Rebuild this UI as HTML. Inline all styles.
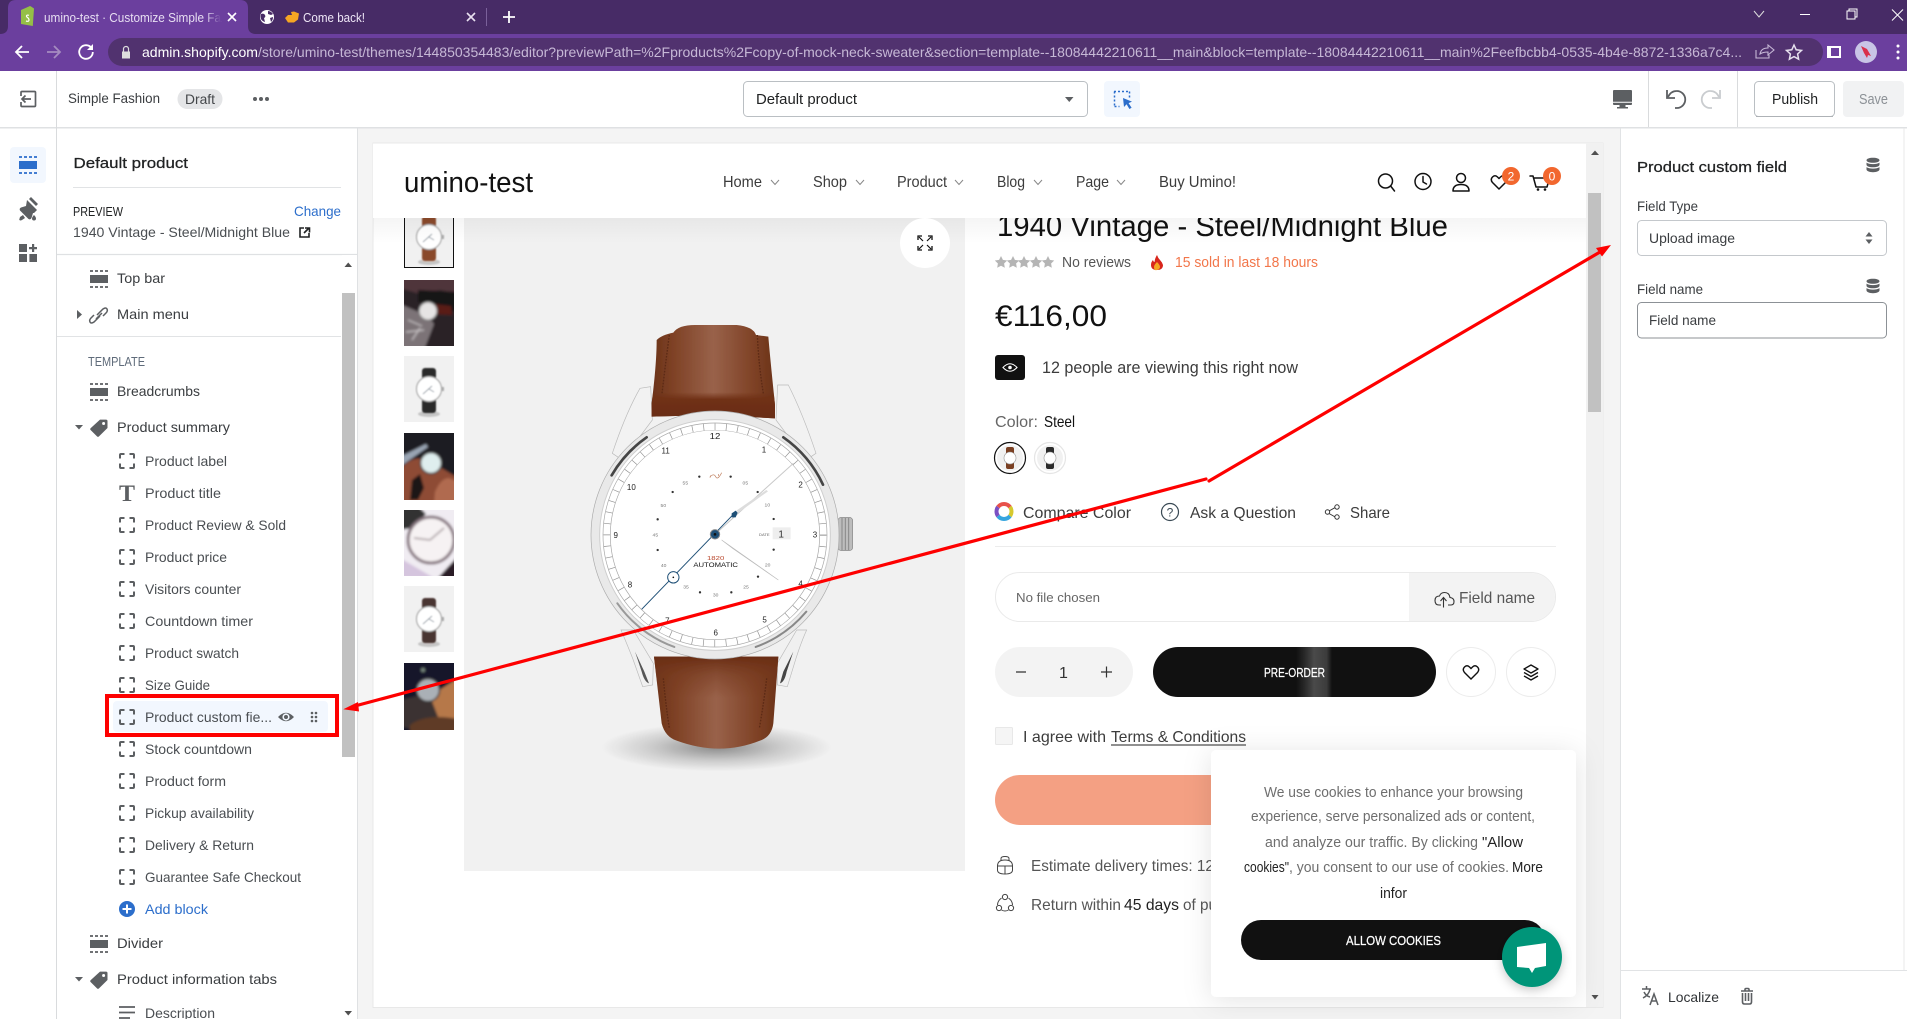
<!DOCTYPE html>
<html lang="en"><head><meta charset="utf-8"><title>umino-test - Customize Simple Fashion</title>
<style>
html,body{margin:0;padding:0;width:1907px;height:1019px;overflow:hidden;background:#fff}
svg{display:block}
text{font-family:"Liberation Sans",sans-serif;white-space:pre}
.a{font-size:14px;fill:#4a4e52}
.h{font-size:14px;fill:#3a3d40}
.t{font-size:15px;fill:#202223;stroke:#202223;stroke-width:.25px}
.p{font-size:16px;fill:#3c3c3c}
.c{font-size:14.5px;fill:#6e6e6e}
.d{font-size:14.5px;fill:#222}
.w{font-size:24px;fill:#222}
.m{font-size:15px;fill:#777}
.ic{fill:none;stroke:#111;stroke-width:1.500;stroke-linecap:round;stroke-linejoin:round}
</style></head><body>
<svg width="1907" height="1019" viewBox="0 0 1907 1019" xmlns="http://www.w3.org/2000/svg">
<defs>
<symbol id="sec" viewBox="0 0 18 18"><path d="M0 1h18M0 17h18" stroke="currentColor" stroke-width="1.800" stroke-dasharray="3 2"/><rect y="5" width="18" height="8" fill="currentColor"/></symbol>
<symbol id="blk" viewBox="0 0 16 16"><path d="M1 5.500V2a1 1 0 0 1 1-1h3.500M10.500 1H14a1 1 0 0 1 1 1v3.500M15 10.500V14a1 1 0 0 1-1 1h-3.500M5.500 15H2a1 1 0 0 1-1-1v-3.500" fill="none" stroke="#5c5f62" stroke-width="2"/></symbol>
<symbol id="tag" viewBox="0 0 18 18"><path fill="#5c5f62" fill-rule="evenodd" d="M10 .6h6a1.500 1.500 0 0 1 1.500 1.500V9L9 17.400a1.400 1.400 0 0 1-2 0L.7 11.100a1.400 1.400 0 0 1 0-2zM13.600 3a1.500 1.500 0 1 0 0 3 1.500 1.500 0 0 0 0-3z"/></symbol>
<symbol id="db" viewBox="0 0 16 16"><path fill="#5c5f62" d="M8 .8c3.600 0 6.500 1 6.500 2.500S11.600 5.800 8 5.800 1.500 4.800 1.500 3.300 4.400.8 8 .8zM1.500 5.600c1.300 1 3.800 1.500 6.500 1.500s5.200-.5 6.500-1.500v2.200C14.500 9.300 11.600 10.300 8 10.300S1.500 9.300 1.500 7.800zM1.500 10.100c1.300 1 3.800 1.500 6.500 1.500s5.200-.5 6.500-1.500v2.400c0 1.500-2.900 2.700-6.500 2.700s-6.500-1.200-6.500-2.700z"/></symbol>
<symbol id="mini" viewBox="0 0 50 66"><ellipse cx="25" cy="58" rx="11" ry="3" fill="#000" opacity=".18"/><rect x="18" y="12" width="14" height="16" rx="3" fill="currentColor"/><rect x="18" y="40" width="14" height="17" rx="3" fill="currentColor"/><circle cx="25" cy="33" r="12.500" fill="#fff" stroke="#a8a8a8" stroke-width="1.200"/><rect x="38" y="31" width="2" height="4" fill="#aaa"/><path d="M19 38L28 30M25 33l5 3" stroke="#567" stroke-width=".7"/></symbol>
<linearGradient id="strap" x1="0" x2="1" y1="0" y2="0"><stop offset="0" stop-color="#6b3319"/><stop offset=".18" stop-color="#7f4226"/><stop offset=".5" stop-color="#99624a"/><stop offset=".82" stop-color="#7f4226"/><stop offset="1" stop-color="#6b3319"/></linearGradient>
<linearGradient id="strapT" x1="0" x2="0" y1="0" y2="1"><stop offset=".72" stop-color="#6f3016" stop-opacity="0"/><stop offset=".8" stop-color="#6f3016"/><stop offset="1" stop-color="#6a2d14"/></linearGradient>
<linearGradient id="strapB" x1="0" x2="0" y1="0" y2="1"><stop offset="0" stop-color="#6a2d14"/><stop offset=".2" stop-color="#74371c" stop-opacity=".5"/><stop offset=".45" stop-color="#7a3a1f" stop-opacity="0"/></linearGradient>
<linearGradient id="hsh" x1="0" x2="0" y1="0" y2="1"><stop offset="0" stop-color="#000" stop-opacity=".04"/><stop offset="1" stop-color="#000" stop-opacity="0"/></linearGradient>
<linearGradient id="gloss" x1="0" x2="1" y1="0" y2="0"><stop offset="0" stop-color="#3c3c3c" stop-opacity="0"/><stop offset=".5" stop-color="#4a4a4a"/><stop offset=".85" stop-color="#3c3c3c"/><stop offset="1" stop-color="#111"/></linearGradient>
<radialGradient id="shd"><stop offset="0" stop-color="#000" stop-opacity=".42"/><stop offset=".55" stop-color="#000" stop-opacity=".16"/><stop offset="1" stop-color="#000" stop-opacity="0"/></radialGradient>
<filter id="pop" x="-15%" y="-15%" width="130%" height="130%"><feDropShadow dx="0" dy="3" stdDeviation="14" flood-color="#000" flood-opacity=".11"/></filter>
<filter id="chatS" x="-30%" y="-30%" width="160%" height="160%"><feDropShadow dx="0" dy="3" stdDeviation="5" flood-color="#000" flood-opacity=".22"/></filter>
<filter id="soft" x="-5%" y="-5%" width="110%" height="110%"><feGaussianBlur stdDeviation=".8"/></filter>
<filter id="soft2" x="-5%" y="-5%" width="110%" height="110%"><feGaussianBlur stdDeviation="1.200"/></filter>
<clipPath id="clipT"><rect x="990" y="218" width="500" height="40"/></clipPath>
<clipPath id="clipDeliv"><rect x="1000" y="850" width="211" height="80"/></clipPath>
<clipPath id="t2"><rect x="404" y="280" width="50" height="66"/></clipPath>
<clipPath id="t4"><rect x="404" y="433" width="50" height="67"/></clipPath>
<clipPath id="t5"><rect x="404" y="510" width="50" height="66"/></clipPath>
<clipPath id="t7"><rect x="404" y="663" width="50" height="67"/></clipPath>
<linearGradient id="fadeTab" x1="0" x2="1"><stop offset="0" stop-color="#6b3f9e" stop-opacity="0"/><stop offset="1" stop-color="#6b3f9e"/></linearGradient>
</defs>

<!-- browser chrome -->
<rect width="1907" height="34" fill="#472b66"/>
<rect y="34" width="1907" height="37" fill="#6b3f9e"/>
<path d="M0 34q8 0 8-8V8q0-8 8-8h224q8 0 8 8v18q0 8 8 8z" fill="#6b3f9e"/>
<path d="M21 10l9-4 1 .5 3 2-1.200 17.500-11.800-2z" fill="#95bf47"/><path d="M26 21q3 1 3-1 0-1.500-1.500-2.500-1.500-1-.8-2 .6-.8 2.300-.2" fill="none" stroke="#fff" stroke-width="1.200"/>
<text x="44" y="22" font-size="13" fill="#e7def2" textLength="177" lengthAdjust="spacingAndGlyphs">umino-test · Customize Simple Fa</text>
<rect x="205" y="8" width="16" height="18" fill="url(#fadeTab)"/>
<path d="M228 13l8 8M236 13l-8 8" stroke="#fff" stroke-width="1.600"/>
<circle cx="267" cy="17" r="7" fill="#fff"/><path d="M261 14q3-1 4 1t-1 3l1 4q-3-1-4-3-1-3 0-5zM268 11q3 0 5 3l-2 1-3-1zM270 18l3-1q0 3-2 5z" fill="#472b66"/>
<path d="M285 18l3-3 4 0-1-3 3-.5 5 2-1 6-4 3-6 0z" fill="#f5a623"/>
<text x="303" y="22" font-size="13" fill="#eee6f6" textLength="62" lengthAdjust="spacingAndGlyphs">Come back!</text>
<path d="M467 13l8 8M475 13l-8 8" stroke="#e8e0f0" stroke-width="1.600"/>
<path d="M486.500 8v18" stroke="#7a609a"/>
<path d="M509 11v12M503 17h12" stroke="#fff" stroke-width="1.800"/>
<path d="M1754 11l5 6 5-6" fill="none" stroke="#ddd" stroke-width="1"/>
<path d="M1800 14.500h10" stroke="#fff" stroke-width="1"/>
<path d="M1847 11h8v8h-8zM1849 11V9h8v8h-2" fill="none" stroke="#fff" stroke-width="1"/>
<path d="M1892 9.500l11 11M1903 9.500l-11 11" stroke="#fff" stroke-width="1"/>

<rect x="108" y="38" width="1715" height="28" rx="14" fill="#51326f"/>
<path d="M29 52H16M22 46l-6 6 6 6" fill="none" stroke="#fff" stroke-width="1.800"/>
<path d="M47 52h13M54 46l6 6-6 6" fill="none" stroke="#a58cc0" stroke-width="1.800"/>
<path d="M91.500 48a6.800 6.800 0 1 0 1.300 4" fill="none" stroke="#fff" stroke-width="1.800"/><path d="M93 44v6h-6z" fill="#fff"/>
<path d="M122 51.500h8v7h-8z" fill="#ddd"/><path d="M123.500 51.500V49a2.500 2.500 0 0 1 5 0v2.500" fill="none" stroke="#ddd" stroke-width="1.200"/>
<text x="142" y="57" font-size="14" fill="#fff" textLength="116" lengthAdjust="spacingAndGlyphs">admin.shopify.com</text>
<text x="258" y="57" font-size="14" fill="#c6b8d6" textLength="1484" lengthAdjust="spacingAndGlyphs">/store/umino-test/themes/144850354483/editor?previewPath=%2Fproducts%2Fcopy-of-mock-neck-sweater&amp;section=template--18084442210611__main&amp;block=template--18084442210611__main%2Feefbcbb4-0535-4b4e-8872-1336a7c4...</text>
<path d="M1756 50v8h13v-3M1760 54q1-6 8-6v-3l6 5-6 5v-3q-5 0-8 2z" fill="none" stroke="#c6b8d6" stroke-width="1.100"/>
<path d="M1794 45l2.200 4.800 5.300.6-3.900 3.600 1 5.200-4.600-2.600-4.600 2.600 1-5.200-3.900-3.600 5.300-.6z" fill="none" stroke="#e6e0ee" stroke-width="1.500"/>
<rect x="1827" y="46" width="14" height="12" fill="#fff"/><rect x="1831" y="48" width="8" height="8" fill="#6b3f9e"/>
<circle cx="1866" cy="52" r="11" fill="#c9c5e6"/><path d="M1861 46l6 3 4 7-3-1-1 3-3-5z" fill="#d9304a"/>
<circle cx="1898" cy="46" r="1.500" fill="#fff"/><circle cx="1898" cy="52" r="1.500" fill="#fff"/><circle cx="1898" cy="58" r="1.500" fill="#fff"/>

<!-- admin top bar -->
<rect y="71" width="1907" height="56" fill="#fff"/>
<rect y="127" width="1907" height="1.500" fill="#dfe1e3"/>
<path d="M56.500 71v948" stroke="#d9dbdd" stroke-width="1"/>
<path d="M1648.500 71v56M1737.500 71v56" stroke="#d9dbdd"/>
<path d="M21 96v-3.500q0-1 1-1h12.500q1 0 1 1v13q0 1-1 1H22q-1 0-1-1V102M31 99H22M25.500 95.500L22 99l3.500 3.500" fill="none" stroke="#5c5f62" stroke-width="1.700"/>
<text x="68" y="103" class="h" textLength="92" lengthAdjust="spacingAndGlyphs">Simple Fashion</text>
<rect x="177.500" y="89" width="45" height="20" rx="10" fill="#e4e5e7"/>
<text x="185" y="104" font-size="14" fill="#44474a" textLength="30" lengthAdjust="spacingAndGlyphs">Draft</text>
<circle cx="255" cy="99" r="2" fill="#5c5f62"/><circle cx="261" cy="99" r="2" fill="#5c5f62"/><circle cx="267" cy="99" r="2" fill="#5c5f62"/>
<rect x="743.500" y="81.500" width="344" height="35" rx="4" fill="#fff" stroke="#babfc3"/>
<text x="756" y="104" font-size="14.500" fill="#202223" textLength="101" lengthAdjust="spacingAndGlyphs">Default product</text>
<path d="M1065 97h8.500l-4.250 5z" fill="#5c5f62"/>
<rect x="1104" y="81" width="36" height="36" rx="4" fill="#f2f7fe"/>
<path d="M1114 91.500h16M1129.500 91.500v6M1114.500 91.500v16M1114.500 106.500h5" fill="none" stroke="#2c6ecb" stroke-width="1.500" stroke-dasharray="2 2"/><path d="M1123 98l9 3.600-3.400 1.500 3 4.700-2.200 1.200-2.800-4.800-2.600 2.800z" fill="#2c6ecb"/>
<path d="M1614 90h17q1 0 1 1v13q0 1-1 1h-17q-1 0-1-1V91q0-1 1-1zM1619.500 105h6v2h2.500v1.500h-11V107h2.500z" fill="#5c5f62"/><path d="M1613 101.800h19v1h-19z" fill="#fff"/>
<path d="M1667 90v8h8" fill="none" stroke="#5c5f62" stroke-width="1.800"/><path d="M1668 97q3-6 8.500-6a8.500 8.500 0 0 1 .5 17h-2" fill="none" stroke="#5c5f62" stroke-width="1.800"/>
<path d="M1720 90v8h-8" fill="none" stroke="#c9cccf" stroke-width="1.800"/><path d="M1719 97q-3-6-8.500-6a8.500 8.500 0 0 0-.5 17h2" fill="none" stroke="#c9cccf" stroke-width="1.800"/>
<rect x="1754.500" y="81.500" width="80" height="35" rx="4" fill="#fff" stroke="#babfc3"/><path d="M1756 116.500h77" stroke="#aeb2b6"/>
<text x="1772" y="104" font-size="14.500" fill="#202223" textLength="46" lengthAdjust="spacingAndGlyphs">Publish</text>
<rect x="1843" y="81" width="61" height="36" rx="4" fill="#f1f2f3"/>
<text x="1859" y="104" font-size="14.500" fill="#8c9196" textLength="29" lengthAdjust="spacingAndGlyphs">Save</text>

<!-- left rail -->
<rect x="10" y="147" width="36" height="36" rx="4" fill="#f2f7fe"/>
<use href="#sec" x="19" y="156" width="18" height="18" color="#2c6ecb"/>
<path d="M27 200l10 10-3 3-1 0-1.500 5q-1 2-3 1L20 210.500q-1-2 1-3l5-1.500zM31 197l7 7-2 2-7-7zM20 217l3-2 2 3-3 2q-2 1-2.800-.2zM34 215q2 2 2 3.500a2 2 0 0 1-4 0q0-1.500 2-3.500z" fill="#5c5f62"/>
<path d="M19 244h8v8h-8zM19 254h8v8h-8zM29.400 254H37v8h-7.600zM32 244h2.200v3H37v2.200h-2.800V252H32v-2.800h-3V247h3z" fill="#5c5f62"/>

<!-- sidebar -->
<rect x="357" y="128" width="1" height="891" fill="#dfe1e3"/>
<text x="73.500" y="168" class="t" textLength="114.500" lengthAdjust="spacingAndGlyphs">Default product</text>
<path d="M73 187.500h268" stroke="#e1e3e5"/>
<text x="73" y="216" font-size="12.500" fill="#202223" textLength="50" lengthAdjust="spacingAndGlyphs">PREVIEW</text>
<text x="294" y="216" font-size="14" fill="#2c6ecb" textLength="47" lengthAdjust="spacingAndGlyphs">Change</text>
<text x="73" y="237" class="a" textLength="217" lengthAdjust="spacingAndGlyphs">1940 Vintage - Steel/Midnight Blue</text>
<path d="M304 228h-4v9h9v-4M304 233l5-5M305 228h4.500v4.500" fill="none" stroke="#202223" stroke-width="1.600"/>
<path d="M57 254.500h300" stroke="#dfe1e3" stroke-width="1.200"/>
<path d="M57 336.500h284" stroke="#e1e3e5"/>

<rect x="342" y="255" width="15" height="764" fill="#fff"/>
<path d="M344.500 267h7.500l-3.750-4.500z" fill="#505050"/><rect x="342" y="293" width="13" height="464" fill="#c1c1c1"/>
<path d="M344.500 1011h7.500l-3.750 4.500z" fill="#505050"/>

<use href="#sec" x="90" y="270" width="18" height="18" color="#5c5f62"/>
<text x="117" y="283" class="h" textLength="48" lengthAdjust="spacingAndGlyphs">Top bar</text>
<path d="M77 310l5 4.500-5 4.500z" fill="#5c5f62"/>
<path d="M97 315l6-6q3-2 4 0t-1 4l-3 3M100 316l-6 6q-3 2-4 0t1-4l3-3M96 319l6-6" fill="none" stroke="#5c5f62" stroke-width="1.500"/>
<text x="117" y="319" class="h" textLength="72" lengthAdjust="spacingAndGlyphs">Main menu</text>

<text x="88" y="366" font-size="12.500" fill="#5f6b7a" textLength="57" lengthAdjust="spacingAndGlyphs">TEMPLATE</text>
<use href="#sec" x="90" y="383" width="18" height="18" color="#5c5f62"/>
<text x="117" y="396" class="h" textLength="83" lengthAdjust="spacingAndGlyphs">Breadcrumbs</text>
<path d="M75 425h8l-4 4.500z" fill="#5c5f62"/>
<use href="#tag" x="90" y="419" width="18" height="18"/>
<text x="117" y="432" class="h" textLength="113" lengthAdjust="spacingAndGlyphs">Product summary</text>

<rect x="113" y="701" width="215" height="31" rx="4" fill="#f2f7fe"/>
<g>
<use href="#blk" x="119" y="453" width="16" height="16"/>
<text x="145" y="466" class="a" textLength="82" lengthAdjust="spacingAndGlyphs">Product label</text>
<text x="119" y="501" font-size="23" font-weight="bold" fill="#5c5f62" style="font-family:'Liberation Serif',serif" textLength="16" lengthAdjust="spacingAndGlyphs">T</text>
<text x="145" y="498" class="a" textLength="76" lengthAdjust="spacingAndGlyphs">Product title</text>
<use href="#blk" x="119" y="517" width="16" height="16"/>
<text x="145" y="530" class="a" textLength="141" lengthAdjust="spacingAndGlyphs">Product Review &amp; Sold</text>
<use href="#blk" x="119" y="549" width="16" height="16"/>
<text x="145" y="562" class="a" textLength="82" lengthAdjust="spacingAndGlyphs">Product price</text>
<use href="#blk" x="119" y="581" width="16" height="16"/>
<text x="145" y="594" class="a" textLength="96" lengthAdjust="spacingAndGlyphs">Visitors counter</text>
<use href="#blk" x="119" y="613" width="16" height="16"/>
<text x="145" y="626" class="a" textLength="108" lengthAdjust="spacingAndGlyphs">Countdown timer</text>
<use href="#blk" x="119" y="645" width="16" height="16"/>
<text x="145" y="658" class="a" textLength="94" lengthAdjust="spacingAndGlyphs">Product swatch</text>
<use href="#blk" x="119" y="677" width="16" height="16"/>
<text x="145" y="690" class="a" textLength="65" lengthAdjust="spacingAndGlyphs">Size Guide</text>
<use href="#blk" x="119" y="709" width="16" height="16"/>
<text x="145" y="722" class="a" textLength="127" lengthAdjust="spacingAndGlyphs">Product custom fie...</text>
<path d="M278 717q8-8.500 16 0-8 8.500-16 0z" fill="#5c5f62"/><circle cx="286" cy="717" r="3.600" fill="#f2f7fe"/><circle cx="286" cy="717" r="2" fill="#5c5f62"/>
<g fill="#5c5f62"><circle cx="312" cy="713" r="1.300"/><circle cx="316" cy="713" r="1.300"/><circle cx="312" cy="717" r="1.300"/><circle cx="316" cy="717" r="1.300"/><circle cx="312" cy="721" r="1.300"/><circle cx="316" cy="721" r="1.300"/></g>
<use href="#blk" x="119" y="741" width="16" height="16"/>
<text x="145" y="754" class="a" textLength="107" lengthAdjust="spacingAndGlyphs">Stock countdown</text>
<use href="#blk" x="119" y="773" width="16" height="16"/>
<text x="145" y="786" class="a" textLength="81" lengthAdjust="spacingAndGlyphs">Product form</text>
<use href="#blk" x="119" y="805" width="16" height="16"/>
<text x="145" y="818" class="a" textLength="109" lengthAdjust="spacingAndGlyphs">Pickup availability</text>
<use href="#blk" x="119" y="837" width="16" height="16"/>
<text x="145" y="850" class="a" textLength="109" lengthAdjust="spacingAndGlyphs">Delivery &amp; Return</text>
<use href="#blk" x="119" y="869" width="16" height="16"/>
<text x="145" y="882" class="a" textLength="156" lengthAdjust="spacingAndGlyphs">Guarantee Safe Checkout</text>
<circle cx="127" cy="909" r="8" fill="#2c6ecb"/><path d="M127 904.500v9M122.500 909h9" stroke="#fff" stroke-width="2"/>
<text x="145" y="914" font-size="14" fill="#2c6ecb" textLength="63" lengthAdjust="spacingAndGlyphs">Add block</text>
<use href="#sec" x="90" y="935" width="18" height="18" color="#5c5f62"/>
<text x="117" y="948" class="h" textLength="46" lengthAdjust="spacingAndGlyphs">Divider</text>
<path d="M75 977h8l-4 4.500z" fill="#5c5f62"/>
<use href="#tag" x="90" y="971" width="18" height="18"/>
<text x="117" y="984" class="h" textLength="160" lengthAdjust="spacingAndGlyphs">Product information tabs</text>
<path d="M119 1007h16M119 1012.500h16M119 1018h11" stroke="#5c5f62" stroke-width="1.800"/>
<text x="145" y="1018" class="a" textLength="70" lengthAdjust="spacingAndGlyphs">Description</text>
</g>

<!-- preview area -->
<rect x="358" y="128.500" width="1262" height="891" fill="#f4f4f4"/>
<rect x="373" y="143" width="1230" height="864.500" fill="#fff" stroke="#e4e4e4" stroke-width=".8"/>
<rect x="1586" y="143" width="17" height="864" fill="#f1f1f1"/>
<path d="M1591 155h8l-4-4.500z" fill="#505050"/><rect x="1588" y="193" width="13" height="219" fill="#c1c1c1"/>
<path d="M1591.500 995h7l-3.500 4.500z" fill="#505050"/>

<!-- thumbnails -->
<rect x="404.500" y="204.500" width="49" height="63" fill="#f1f1f1" stroke="#111"/>
<use href="#mini" x="404" y="204" width="50" height="66" color="#8a4a2a" filter="url(#soft)"/>
<g clip-path="url(#t2)"><g filter="url(#soft2)">
<rect x="400" y="276" width="58" height="74" fill="#2a2426"/>
<path d="M400 276h58v18l-18-4-20 4-20-6z" fill="#4f343a"/><path d="M418 290l40 2v20l-40-10z" fill="#191517"/>
<path d="M400 304l28 12 6 8-10 26h-24z" fill="#7c7377"/><path d="M408 320l14 6M406 332l18-2M412 340l8-12" stroke="#c9c4c6" stroke-width="1.200" fill="none"/>
<path d="M434 304l17 2 1 9-18-1z" fill="#5a1a18"/><circle cx="428" cy="311" r="9" fill="#e6e4e4" stroke="#777" stroke-width="1"/>
</g></g>
<rect x="404" y="356" width="50" height="66" fill="#f1f1f1"/>
<use href="#mini" x="404" y="356" width="50" height="66" color="#2b2b2b" filter="url(#soft)"/>
<g clip-path="url(#t4)"><g filter="url(#soft2)">
<rect x="400" y="429" width="58" height="75" fill="#1c1a22"/>
<path d="M400 470q12-16 28-10l30 18v26h-58z" fill="#8e4b36"/><path d="M412 480l8-6 4 14-6 12h-8z" fill="#1d1518"/><path d="M400 457l26-13 2 3-20 14-8 6z" fill="#9aa5b4"/>
<circle cx="431" cy="463" r="10.500" fill="#dfeeee" stroke="#444" stroke-width="1.500"/><path d="M435 492q6-14 14-14l9 4v22h-24z" fill="#b06a50"/>
</g></g>
<g clip-path="url(#t5)"><g filter="url(#soft2)">
<rect x="400" y="506" width="58" height="74" fill="#f0ecf2"/>
<path d="M400 506h18l8 8-14 14-12 2z" fill="#303032"/>
<path d="M400 558l34 20h-34z" fill="#d5c5de"/><path d="M436 580l22-24v24z" fill="#2a1e25"/>
<circle cx="431" cy="540" r="23" fill="#f6f2f3" stroke="#85757e" stroke-width="3"/><path d="M430 540l14-12M430 540l-16-2" stroke="#8a7a80" stroke-width="1.200"/>
</g></g>
<rect x="404" y="586" width="50" height="66" fill="#f1f1f1"/>
<use href="#mini" x="404" y="586" width="50" height="66" color="#4a3630" filter="url(#soft)"/>
<g clip-path="url(#t7)"><g filter="url(#soft2)">
<rect x="400" y="659" width="58" height="75" fill="#12192a"/>
<path d="M400 700l26-6 32 4v36h-32l-26-8z" fill="#3a3230"/><path d="M430 696l28-18v40l-18 4z" fill="#b6784a"/><path d="M410 725q16-12 48-6v15h-48z" fill="#5e3a28"/>
<circle cx="428" cy="690" r="11.500" fill="#aab0b6" stroke="#3a3a3a" stroke-width="1.500"/><circle cx="423" cy="670" r="2" fill="#7a8a80"/>
</g></g>

<!-- main image -->
<rect x="464" y="218" width="501" height="653" fill="#f1f1f1"/>

<!-- watch, drawn in 3x space -->
<g transform="translate(460 290) scale(.33333)" filter="url(#soft)">
<ellipse cx="770" cy="1372" rx="345" ry="72" fill="url(#shd)"/>
<path d="M540 295l32-5 5 100-90 120-30-20q40-120 83-195z" fill="#f2f2f2" stroke="#bbb" stroke-width="2"/>
<path d="M985 285l-32 0-5 105 90 120 30-20q-40-120-83-205z" fill="#f2f2f2" stroke="#bbb" stroke-width="2"/>
<path d="M520 1020l60 100 -2 65-30 5-30-85q-20-50-35-85z" fill="#f0f0f0" stroke="#bbb" stroke-width="2"/>
<path d="M1010 1020l-58 100 0 65 30 5 26-85q16-50 32-85z" fill="#f0f0f0" stroke="#bbb" stroke-width="2"/>
<path d="M1000 1085l-30 60-10 35q14-4 20-35z" fill="#444"/><path d="M525 1085l28 60 14 35q-14-4-22-35z" fill="#555"/>
<path d="M640 128Q655 105 705 105L830 105Q880 110 888 135L925 140Q930 200 945 345L945 385 760 375 575 380 575 340Q590 220 590 150Q605 135 640 128z" fill="url(#strap)"/>
<path d="M640 128Q655 105 705 105L830 105Q880 110 888 135L925 140Q930 200 945 345L945 385 760 375 575 380 575 340Q590 220 590 150Q605 135 640 128z" fill="url(#strapT)"/>
<path d="M628 135q-12 90-22 175M892 135q4 90 18 175" stroke="#5c2a14" stroke-width="4" stroke-dasharray="5 4" fill="none"/>
<path d="M582 1100H955L940 1300Q935 1340 900 1352Q780 1400 650 1352Q615 1340 605 1300z" fill="url(#strap)"/>
<path d="M582 1100H955L940 1300Q935 1340 900 1352Q780 1400 650 1352Q615 1340 605 1300z" fill="url(#strapB)"/>
<path d="M610 1165q6 70 18 150M920 1165q-8 70-22 150" stroke="#5c2a14" stroke-width="4" stroke-dasharray="5 4" fill="none"/>
<rect x="1134" y="682" width="44" height="100" rx="10" fill="#bdbdbd" stroke="#888" stroke-width="2"/>
<path d="M1146 684v96M1156 684v96M1166 684v96" stroke="#888" stroke-width="3"/>
<circle cx="765" cy="735" r="372" fill="#e9e9e9" stroke="#aaa" stroke-width="2"/>
<g fill="none" stroke-linecap="round"><path d="M455 556A358 358 0 0 1 560 442" stroke="#444" stroke-width="8"/><path d="M970 442A358 358 0 0 1 1089 584" stroke="#444" stroke-width="8"/><path d="M472 940A358 358 0 0 0 643 1071" stroke="#999" stroke-width="6"/><path d="M1039 965A358 358 0 0 1 887 1071" stroke="#888" stroke-width="6"/></g>
<circle cx="765" cy="735" r="346" fill="#fff" stroke="#cfcfcf" stroke-width="3"/>
<circle cx="765" cy="735" r="325" fill="none" stroke="#8f8f8f" stroke-width="20" stroke-dasharray="2 32"/>
<circle cx="765" cy="735" r="336" fill="none" stroke="#a5a5a5" stroke-width="2"/>
<circle cx="765" cy="735" r="314" fill="none" stroke="#a5a5a5" stroke-width="2"/>
<circle cx="765" cy="733" r="312" fill="#fff"/>
<g fill="#333"><circle cx="718" cy="560" r="3.500"/><circle cx="812" cy="560" r="3.500"/><circle cx="893" cy="606" r="3.500"/><circle cx="941" cy="687" r="3.500"/><circle cx="941" cy="779" r="3.500"/><circle cx="894" cy="860" r="3.500"/><circle cx="814" cy="907" r="3.500"/><circle cx="720" cy="907" r="3.500"/><circle cx="639" cy="860" r="3.500"/><circle cx="593" cy="780" r="3.500"/><circle cx="593" cy="688" r="3.500"/><circle cx="638" cy="606" r="3.500"/></g>
</g>
<g transform="translate(460 290) scale(.33333)">
<g text-anchor="middle"><text x="765" y="447" class="w" textLength="32" lengthAdjust="spacingAndGlyphs">12</text><text x="912" y="488" class="w">1</text><text x="1022" y="593" class="w">2</text><text x="1065" y="742" class="w">3</text><text x="1022" y="890" class="w">4</text><text x="914" y="998" class="w">5</text><text x="767" y="1037" class="w">6</text><text x="622" y="1000" class="w">7</text><text x="510" y="892" class="w">8</text><text x="467" y="744" class="w">9</text><text x="514" y="600" class="w">10</text><text x="617" y="491" class="w">11</text>
<text x="856" y="583" class="m">05</text><text x="922" y="649" class="m">10</text><text x="923" y="829" class="m">20</text><text x="858" y="896" class="m">25</text><text x="767" y="920" class="m">30</text><text x="678" y="896" class="m">35</text><text x="611" y="831" class="m">40</text><text x="586" y="740" class="m">45</text><text x="610" y="651" class="m">50</text><text x="676" y="584" class="m">55</text>
<text x="767" y="810" fill="#b8452a" textLength="52" lengthAdjust="spacingAndGlyphs" style="font-size:17px">1820</text><text x="767" y="831" fill="#111" textLength="134" lengthAdjust="spacingAndGlyphs" style="font-size:19px">AUTOMATIC</text>
<text x="913" y="738" fill="#666" textLength="32" lengthAdjust="spacingAndGlyphs" style="font-size:10px">DATE</text></g>
<rect x="938" y="712" width="54" height="36" fill="#eee"/><text x="955" y="743" fill="#333" style="font-size:30px">1</text>
<path d="M749 562q12-14 18-2t18-12M752 556v6M775 552v6" stroke="#c08060" stroke-width="2" fill="none"/>
<path d="M765 733L1000 520" stroke="#c9c9c9" stroke-width="3"/><path d="M835 668l-6-6 90-62 5 4z" fill="#ddd"/>
<path d="M785 750l170 120-136-94z" fill="#d3d3d3" stroke="#bbb" stroke-width="2"/>
<path d="M545 958L825 668" stroke="#1e4f76" stroke-width="3"/><path d="M815 670l12-8 6 6-6 14-12 0z" fill="#1e4f76"/>
<circle cx="640" cy="862" r="17" fill="#fff" stroke="#1e4f76" stroke-width="3"/><circle cx="640" cy="862" r="2.500" fill="#111"/>
<circle cx="765" cy="733" r="14" fill="#1e4f76" stroke="#888" stroke-width="3"/><circle cx="765" cy="733" r="4" fill="#111"/>
</g>

<!-- header shadow over the page content -->
<rect x="373" y="218" width="1213" height="26" fill="url(#hsh)"/>
<circle cx="925" cy="243" r="25" fill="#fff"/>
<path d="M919 237l4 4M931 237l-4 4M919 249l4-4M931 249l-4-4" stroke="#111" stroke-width="1.200"/>
<path d="M918 240v-4h4M932 240v-4h-4M918 246v4h4M932 246v4h-4" fill="none" stroke="#111" stroke-width="1.300"/>

<!-- product info -->
<g clip-path="url(#clipT)"><text x="997" y="236" font-size="30" fill="#111" textLength="451" lengthAdjust="spacingAndGlyphs">1940 Vintage - Steel/Midnight Blue</text></g>
<g fill="#b5b5b5"><path d="M1001 256l1.900 3.900 4.300.6-3.100 3 .7 4.300-3.800-2-3.800 2 .7-4.300-3.100-3 4.300-.6z"/><path d="M1013 256l1.900 3.900 4.300.6-3.100 3 .7 4.300-3.800-2-3.800 2 .7-4.300-3.100-3 4.300-.6z"/><path d="M1024 256l1.900 3.900 4.300.6-3.100 3 .7 4.300-3.800-2-3.800 2 .7-4.300-3.100-3 4.300-.6z"/><path d="M1036 256l1.900 3.900 4.300.6-3.100 3 .7 4.300-3.800-2-3.800 2 .7-4.300-3.100-3 4.300-.6z"/><path d="M1048 256l1.900 3.900 4.300.6-3.100 3 .7 4.300-3.800-2-3.800 2 .7-4.300-3.100-3 4.300-.6z"/></g>
<text x="1062" y="267" font-size="15" fill="#555" textLength="69" lengthAdjust="spacingAndGlyphs">No reviews</text>
<path d="M1157 255q1 3 3 5t3 5q0 5-6 5t-6-5q0-3 2-5 .5 2 1.500 2 .5-4 2.500-7z" fill="#d8261c"/><path d="M1157 262q3 3 3 5t-3 3-3-3q0-2 3-5z" fill="#f5a623"/>
<text x="1175" y="267" font-size="15" fill="#f2764a" textLength="143" lengthAdjust="spacingAndGlyphs">15 sold in last 18 hours</text>
<text x="995" y="326" font-size="30" fill="#111" textLength="112" lengthAdjust="spacingAndGlyphs">€116,00</text>
<rect x="995" y="355" width="30" height="25" rx="3" fill="#111"/>
<path d="M1003 367.500q7-7.500 14 0-7 7.500-14 0z" fill="none" stroke="#fff" stroke-width="1.100"/><circle cx="1010" cy="367.500" r="1.800" fill="#fff"/>
<text x="1042" y="373" font-size="16.500" fill="#3c3c3c" textLength="256" lengthAdjust="spacingAndGlyphs">12 people are viewing this right now</text>
<text x="995" y="427" class="p" style="fill:#666" textLength="43" lengthAdjust="spacingAndGlyphs">Color:</text>
<text x="1044" y="427" class="p" style="fill:#111" textLength="31" lengthAdjust="spacingAndGlyphs">Steel</text>
<circle cx="1010" cy="458" r="15.500" fill="#fff" stroke="#111" stroke-width="1.200"/><circle cx="1010" cy="458" r="13" fill="#f1f1f1"/><rect x="1006" y="447" width="8" height="22" rx="2" fill="#7a3f22"/><circle cx="1010" cy="458" r="6" fill="#fff" stroke="#999" stroke-width=".6"/>
<circle cx="1050" cy="458" r="15.500" fill="#fff" stroke="#e5e5e5" stroke-width="1.200"/><circle cx="1050" cy="458" r="13" fill="#f1f1f1"/><rect x="1046" y="447" width="8" height="22" rx="2" fill="#2b2b2b"/><circle cx="1050" cy="458" r="6" fill="#fff" stroke="#999" stroke-width=".6"/>
<g fill="none" stroke-width="4"><path d="M998 507a7.500 7.500 0 0 1 12 0" stroke="#e8524a"/><path d="M1010 507a7.500 7.500 0 0 1 0 9" stroke="#d6c92e"/><path d="M1010 516a7.500 7.500 0 0 1-12 0" stroke="#36a5de"/><path d="M998 516a7.500 7.500 0 0 1 0-9" stroke="#7a4fc2"/></g>
<text x="1023" y="518" class="p" textLength="108" lengthAdjust="spacingAndGlyphs">Compare Color</text>
<circle cx="1170" cy="512" r="8.500" fill="none" stroke="#3a4a55" stroke-width="1.200"/>
<text x="1170" y="516.500" font-size="12" fill="#3a4a55" text-anchor="middle">?</text>
<text x="1190" y="518" class="p" textLength="106" lengthAdjust="spacingAndGlyphs">Ask a Question</text>
<path d="M1329 511l8-4.500M1329 513.500l8 4.500" stroke="#333" stroke-width="1"/><circle cx="1327.500" cy="512" r="2.200" fill="#fff" stroke="#333"/><circle cx="1337" cy="507" r="2.200" fill="#fff" stroke="#333"/><circle cx="1337" cy="517" r="2.200" fill="#fff" stroke="#333"/>
<text x="1350" y="518" class="p" textLength="40" lengthAdjust="spacingAndGlyphs">Share</text>
<path d="M995 546.500h561" stroke="#ececec"/>
<rect x="995.500" y="572.500" width="560" height="49" rx="24.500" fill="#fff" stroke="#eaeaea"/>
<path d="M1409 573h122a24 24 0 0 1 24 24.500 24 24 0 0 1-24 23.500h-122z" fill="#f3f3f3"/>
<text x="1016" y="602" font-size="13" fill="#666" textLength="84" lengthAdjust="spacingAndGlyphs">No file chosen</text>
<path d="M1448 605h3q3 0 3-3.500t-4-4q-.8-5-5.500-5-3.800 0-5 3.500-4.500 0-4.500 4.500 0 4.500 4 4.500h2M1443.500 597.500v10M1440.500 601l3-3.500 3 3.500" fill="none" stroke="#333" stroke-width="1.100"/>
<text x="1459" y="603" font-size="16" fill="#555" textLength="76" lengthAdjust="spacingAndGlyphs">Field name</text>
<rect x="995" y="647" width="138" height="50" rx="25" fill="#f3f3f3"/>
<path d="M1016 672h10M1101 672h11M1106.500 666.500v11" stroke="#333" stroke-width="1.200"/>
<text x="1063.500" y="678" font-size="16" fill="#333" text-anchor="middle">1</text>
<rect x="1153" y="647" width="283" height="50" rx="25" fill="#111"/>
<rect x="1296" y="647" width="36" height="50" fill="url(#gloss)"/>
<text x="1264" y="677" font-size="13" fill="#fff" stroke="#fff" stroke-width=".25" textLength="61" lengthAdjust="spacingAndGlyphs">PRE-ORDER</text>
<circle cx="1471" cy="672" r="24.500" fill="#fff" stroke="#ececec"/>
<path d="M1471 679l-6.500-6.500q-2.500-3 0-5.500t5 0l1.500 1.500 1.500-1.500q2.500-2.500 5 0t0 5.500z" fill="none" stroke="#111" stroke-width="1.400"/>
<circle cx="1531" cy="672" r="24.500" fill="#fff" stroke="#ececec"/>
<path d="M1531 665l7 4-7 4-7-4zM1524 672.500l7 4 7-4M1524 676l7 4 7-4" fill="none" stroke="#111" stroke-width="1.300" stroke-linejoin="round"/>
<rect x="995.500" y="727.500" width="17" height="17" rx="1" fill="#f5f5f5" stroke="#e8e8e8"/>
<text x="1023" y="742" class="p" textLength="83" lengthAdjust="spacingAndGlyphs">I agree with</text>
<text x="1111" y="742" class="p" textLength="135" lengthAdjust="spacingAndGlyphs">Terms &amp; Conditions</text>
<path d="M1111 745h135" stroke="#222"/>
<rect x="995" y="775" width="400" height="50" rx="25" fill="#f4a083"/>
<path d="M997.500 866q0-6 7.500-6t7.500 6v4q0 4-7.500 4t-7.500-4zM1001 860.500v-2q0-2 4-2t4 2v2M997.500 866h15M1005 866v8" fill="none" stroke="#444" stroke-width="1"/>
<g clip-path="url(#clipDeliv)"><text x="1031" y="871" class="p" textLength="188" lengthAdjust="spacingAndGlyphs" style="fill:#555">Estimate delivery times: 12-</text>
<text x="1031" y="910" class="p" textLength="90" lengthAdjust="spacingAndGlyphs" style="fill:#555">Return within</text>
<text x="1124" y="910" class="p" textLength="55" lengthAdjust="spacingAndGlyphs" style="fill:#222">45 days</text>
<text x="1183" y="910" class="p" textLength="34" lengthAdjust="spacingAndGlyphs" style="fill:#555">of pu</text></g>
<circle cx="1005" cy="897" r="2.600" fill="none" stroke="#444"/><circle cx="999" cy="908" r="2.600" fill="none" stroke="#444"/><circle cx="1011" cy="908" r="2.600" fill="none" stroke="#444"/><path d="M1001.500 898q-4 3-4 7M1008.500 898q4 3 4 7M1001.500 910q3.500 2 7 0" fill="none" stroke="#444"/>

<!-- store header -->
<rect x="373" y="143.500" width="1213" height="74.500" fill="#fff"/>
<text x="404" y="192" font-size="29" fill="#111" textLength="129" lengthAdjust="spacingAndGlyphs">umino-test</text>
<text x="723" y="187" class="p" textLength="39" lengthAdjust="spacingAndGlyphs">Home</text>
<text x="813" y="187" class="p" textLength="34" lengthAdjust="spacingAndGlyphs">Shop</text>
<text x="897" y="187" class="p" textLength="50" lengthAdjust="spacingAndGlyphs">Product</text>
<text x="997" y="187" class="p" textLength="28" lengthAdjust="spacingAndGlyphs">Blog</text>
<text x="1076" y="187" class="p" textLength="33" lengthAdjust="spacingAndGlyphs">Page</text>
<text x="1159" y="187" class="p" textLength="77" lengthAdjust="spacingAndGlyphs">Buy Umino!</text>
<path d="M771 180l4 4.500 4-4.500M856 180l4 4.500 4-4.500M955 180l4 4.500 4-4.500M1034 180l4 4.500 4-4.500M1117 180l4 4.500 4-4.500" fill="none" stroke="#888" stroke-width="1"/>
<circle cx="1385.500" cy="181" r="7" class="ic"/><path d="M1391 186.500l3.500 4.500" class="ic"/>
<circle cx="1423" cy="181.500" r="8" class="ic"/><path d="M1423 176.500v5.500l3.500 2" class="ic"/>
<circle cx="1461" cy="178" r="4.500" class="ic"/><path d="M1453 191q0-6.500 8-6.500t8 6.500z" class="ic"/>
<path d="M1499 189l-6.500-6.500q-2.500-3 0-5.500t5 0l1.500 1.500 1.500-1.500q2.500-2.500 5 0t0 5.500z" class="ic"/>
<path d="M1530 176l3 0 3 11h11l2.500-9h-15.500" class="ic"/><circle cx="1538" cy="189.500" r="1.300" fill="#111"/><circle cx="1545" cy="189.500" r="1.300" fill="#111"/>
<circle cx="1511" cy="176" r="9" fill="#f2672e"/><text x="1511" y="180.500" font-size="12" fill="#fff" text-anchor="middle">2</text>
<circle cx="1552" cy="176" r="9" fill="#f2672e"/><text x="1552" y="180.500" font-size="12" fill="#fff" text-anchor="middle">0</text>

<!-- cookie popup -->
<rect x="1211" y="750" width="365" height="247" rx="5" fill="#fff" filter="url(#pop)"/>
<text x="1264" y="797" class="c" textLength="259" lengthAdjust="spacingAndGlyphs">We use cookies to enhance your browsing</text>
<text x="1251" y="821" class="c" textLength="284" lengthAdjust="spacingAndGlyphs">experience, serve personalized ads or content,</text>
<text x="1265" y="847" class="c" textLength="213" lengthAdjust="spacingAndGlyphs">and analyze our traffic. By clicking</text>
<text x="1482" y="847" class="d" textLength="41" lengthAdjust="spacingAndGlyphs">"Allow</text>
<text x="1244" y="872" class="d" textLength="45" lengthAdjust="spacingAndGlyphs">cookies"</text>
<text x="1289" y="872" class="c" textLength="220" lengthAdjust="spacingAndGlyphs">, you consent to our use of cookies.</text>
<text x="1512" y="872" class="d" textLength="31" lengthAdjust="spacingAndGlyphs">More</text>
<text x="1380" y="898" class="d" textLength="27" lengthAdjust="spacingAndGlyphs">infor</text>
<rect x="1241" y="920" width="304" height="40" rx="20" fill="#111"/>
<text x="1346" y="945" font-size="13" fill="#fff" stroke="#fff" stroke-width=".25" textLength="95" lengthAdjust="spacingAndGlyphs">ALLOW COOKIES</text>
<circle cx="1532" cy="957" r="30" fill="#009579" filter="url(#chatS)"/>
<path d="M1517 947l29-4v23l-11 2-3 5-3-5-12-1z" fill="#fff"/>

<!-- right panel -->
<rect x="1620" y="128.500" width="287" height="891" fill="#fff"/>
<path d="M1620.500 128v891" stroke="#e1e3e5"/>
<path d="M1904 128v842" stroke="#e8e8e8"/>
<text x="1637" y="172" class="t" textLength="150" lengthAdjust="spacingAndGlyphs">Product custom field</text>
<use href="#db" x="1865" y="157" width="16" height="16"/>
<text x="1637" y="211" class="h" textLength="61" lengthAdjust="spacingAndGlyphs">Field Type</text>
<rect x="1637.500" y="220.500" width="249" height="35" rx="4" fill="#fff" stroke="#c4c8cc"/>
<text x="1649" y="243" class="h" textLength="86" lengthAdjust="spacingAndGlyphs">Upload image</text>
<path d="M1865.500 236.500h7l-3.500-4.500zM1865.500 239.500h7l-3.500 4.500z" fill="#5c5f62"/>
<text x="1637" y="294" class="h" textLength="66" lengthAdjust="spacingAndGlyphs">Field name</text>
<use href="#db" x="1865" y="278" width="16" height="16"/>
<rect x="1637.500" y="302.500" width="249" height="35.500" rx="4" fill="#fff" stroke="#8c9196"/>
<text x="1649" y="325" class="h" textLength="67" lengthAdjust="spacingAndGlyphs">Field name</text>
<path d="M1620 970.500h287" stroke="#e1e3e5"/>
<path d="M1642 989h9M1646.500 986v3M1650 989q-1 6-7 9M1644 992q2 4 6 5M1650 1005l4-11 4 11M1651.500 1001h5" fill="none" stroke="#5c5f62" stroke-width="1.500"/>
<text x="1668" y="1002" font-size="14" fill="#303336" textLength="51" lengthAdjust="spacingAndGlyphs">Localize</text>
<path d="M1741 991h12M1745 991v-1.500q0-1 1-1h2q1 0 1 1v1.500" fill="none" stroke="#5c5f62" stroke-width="1.600"/><path d="M1742.500 993v9q0 2 2 2h5q2 0 2-2v-9M1745.500 993v8M1748.500 993v8" fill="none" stroke="#5c5f62" stroke-width="1.600"/>

<!-- annotations -->
<rect x="107" y="696" width="230" height="39" fill="none" stroke="#fe0000" stroke-width="4"/>
<path d="M353 706.500L1206 479" stroke="#fe0000" stroke-width="3.200" stroke-linecap="round"/>
<path d="M343.300 709.300L358 702l1 9.500z" fill="#fe0000"/>
<path d="M1209 481L1600 252" stroke="#fe0000" stroke-width="3.200" stroke-linecap="round"/>
<path d="M1611 245L1596 248l6 8.500z" fill="#fe0000"/>
</svg>
</body></html>
